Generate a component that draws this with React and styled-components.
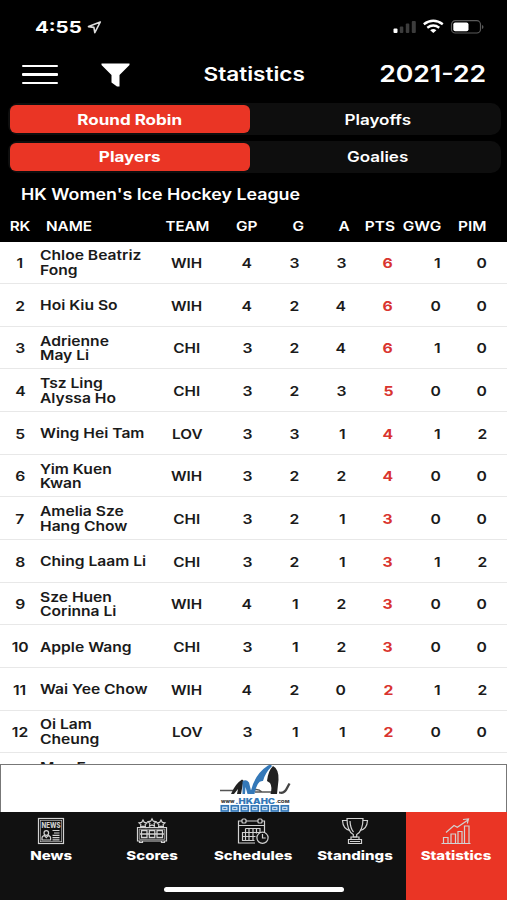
import React from "react";
import styled, { createGlobalStyle } from "styled-components";

const HEADERS = ["GP", "G", "A", "PTS", "GWG", "PIM"];

const PLAYERS = [
  { name: "Chloe Beatriz\nFong", team: "WIH", stats: [4, 3, 3, 6, 1, 0] },
  { name: "Hoi Kiu So", team: "WIH", stats: [4, 2, 4, 6, 0, 0] },
  { name: "Adrienne\nMay Li", team: "CHI", stats: [3, 2, 4, 6, 1, 0] },
  { name: "Tsz Ling\nAlyssa Ho", team: "CHI", stats: [3, 2, 3, 5, 0, 0] },
  { name: "Wing Hei Tam", team: "LOV", stats: [3, 3, 1, 4, 1, 2] },
  { name: "Yim Kuen\nKwan", team: "WIH", stats: [3, 2, 2, 4, 0, 0] },
  { name: "Amelia Sze\nHang Chow", team: "CHI", stats: [3, 2, 1, 3, 0, 0] },
  { name: "Ching Laam Li", team: "CHI", stats: [3, 2, 1, 3, 1, 2] },
  { name: "Sze Huen\nCorinna Li", team: "WIH", stats: [4, 1, 2, 3, 0, 0] },
  { name: "Apple Wang", team: "CHI", stats: [3, 1, 2, 3, 0, 0] },
  { name: "Wai Yee Chow", team: "WIH", stats: [4, 2, 0, 2, 1, 2] },
  { name: "Oi Lam\nCheung", team: "LOV", stats: [3, 1, 1, 2, 0, 0] },
  { name: "Mae F\n ", team: "", stats: [] },
];

const NewsIcon = () => (
  <TabSvg viewBox="0 0 34 30">
    <rect x="4.5" y="2.5" width="25" height="25" />
    <rect x="6.3" y="4.3" width="21.4" height="21.4" strokeWidth="0.6" />
    <text x="17" y="12" textAnchor="middle" textLength="19" lengthAdjust="spacingAndGlyphs">
      NEWS
    </text>
    <circle cx="12.3" cy="17" r="2.3" />
    <path d="M8 24v-2q0-2 2.5-2.3l1.8 2 1.8-2q2.5.3 2.5 2.3v2zM18.5 14.5h7M20 17h5.5M18.5 19.3h7M18.5 21.6h7M18.5 23.9h7" />
  </TabSvg>
);

const STAR = "l1.300 2.400 2.700.4-1.900 1.900.4 2.700-2.500-1.200-2.500 1.200.4-2.700-1.900-1.900 2.700-.4z";

const ScoresIcon = () => (
  <TabSvg viewBox="0 0 34 30">
    <path d="M2.500 11.500h29v13.500h-29zM4.500 25v1.500h3V25M26.500 25v1.500h3V25" />
    <path d="M4.300 13.200h25.400v10.100H4.300z" strokeWidth="0.700" />
    <path d="M6.500 14.500h5.500v7H6.500zM14.300 14.500h5.500v7h-5.500zM22 14.500h5.500v7H22zM5 18h24" strokeWidth="1.300" />
    <path d={`M8 4${STAR}M17 2.800${STAR}M26 4${STAR}`} />
  </TabSvg>
);

const SchedulesIcon = () => (
  <TabSvg viewBox="0 0 34 30">
    <path d="M19 27H2.500V5H6M10 5h12M26 5h2.500v12M3 9.500h25.500" />
    <rect x="6" y="3" width="4" height="4" rx="1" />
    <rect x="22" y="3" width="4" height="4" rx="1" />
    <path d="M9.500 12.500h14.500v4M6.500 16v8.500h12M6.500 16.500h17.500M6.500 20.500h13M9.500 12.500v12M13 12.500v12M17 12.500v12M20.500 12.500v5" />
    <circle cx="26.500" cy="21.800" r="5.600" />
    <path d="M26.500 18v4h3.200" />
  </TabSvg>
);

const StandingsIcon = () => (
  <TabSvg viewBox="0 0 34 30">
    <path d="M9 2.500h16q0 12.500-6.300 16v2.500h-3.400v-2.500Q9 15 9 2.500z" />
    <path d="M9.200 4.500H4.500q.5 8.500 7.300 10M24.800 4.500h4.700q-.5 8.500-7.300 10M12 5q.4 7.500 3.500 11" />
    <path d="M13 21h8v2.500h-8zM10.500 23.500h13v4h-13zM12 25.500h10" />
  </TabSvg>
);

const StatisticsIcon = () => (
  <TabSvg viewBox="0 0 34 30">
    <path d="M2.500 27.500h29M4.500 27.500V21.500h4.500v6M12 27.500V18h4.500v9.500M19 27.500v-12h4v12M25.500 27.500V10h4.500v17.500" />
    <path d="M7 16.500l8-7 3.300 1.800L29 4M24 3.500l5.500-.5-1.200 4.500" />
  </TabSvg>
);

const TABS = [
  { label: "News", Icon: NewsIcon },
  { label: "Scores", Icon: ScoresIcon },
  { label: "Schedules", Icon: SchedulesIcon },
  { label: "Standings", Icon: StandingsIcon },
  { label: "Statistics", Icon: StatisticsIcon, active: true },
];

const LocationIcon = () => (
  <svg width="15" height="13" viewBox="0 0 15 13" fill="none" stroke="#ddd" strokeWidth="1.600" strokeLinejoin="round">
    <path d="M13.300 1L1.500 5.600l5.400.8.900 5.200z" />
  </svg>
);

const StatusIcons = () => (
  <svg width="92" height="16" viewBox="0 0 92 16">
    <rect x="0.500" y="9.500" width="4" height="4.500" rx="1" fill="#fff" />
    <rect x="6.800" y="7.500" width="3.500" height="6.500" rx="1" fill="#3c3c3c" />
    <rect x="12.800" y="4.500" width="3.500" height="9.500" rx="1" fill="#3c3c3c" />
    <rect x="18.800" y="2" width="4" height="12" rx="1" fill="#3c3c3c" />
    <g fill="none" stroke="#fff" strokeWidth="2.400">
      <path d="M30.800 5.300q9.500-7 19 0" />
      <path d="M34.300 8.700q6-4.300 12 0" />
    </g>
    <path d="M37.200 11.200q3.100-2.200 6.200 0l-3.100 2.800z" fill="#fff" />
    <rect x="58.500" y="1.700" width="29" height="12.300" rx="3.800" fill="none" stroke="#5a5a5a" strokeWidth="1.200" />
    <rect x="60.300" y="3.500" width="15.200" height="8.800" rx="2" fill="#fff" />
    <path d="M89 6v4q1.500-.5 1.500-2T89 6z" fill="#5a5a5a" />
  </svg>
);

const FunnelIcon = () => (
  <svg width="29" height="24" viewBox="0 0 29 24">
    <path d="M0.500 0.500h28v1.500L18.500 12v11.500h-2.500l-5.500-4V12L0.500 2z" fill="#fff" />
  </svg>
);

const LeagueLogo = () => (
  <svg width="72" height="47" viewBox="0 0 72 47">
    <path d="M1 25.500h13M30 27q8-5 13 0M36 27h18" stroke="#555" strokeWidth="1.300" fill="none" />
    <path d="M12 29q4-10 11-14.500l1.500 1L22 29h-4l1-5-4 5z" fill="#222" />
    <path d="M23.500 29V16.500q3.500-3 6.500 1l2 8Q36 9 49 .5q3-1.500 4 .5-7 7-9 15-6-1-8.500 13h-7L26.500 22 26 29z" fill="#3478b8" />
    <path d="M54 1q6 3 5.500 14L58 29h-6.500q2-7-.5-11l-3-2Q49 6 54 1z" fill="#222" />
    <path d="M60 26.500q5 1 7-4l2.500-4.500 2 1-3.500 6.500q-3 4.500-8 3z" fill="#444" />
    <LogoText x="2" y="38.300" textLength="13.500" lengthAdjust="spacingAndGlyphs" fill="#444" $size={4.500}>
      www
    </LogoText>
    <LogoText x="16" y="38.500" textLength="40" lengthAdjust="spacingAndGlyphs" fill="#3478b8" $size={7}>
      .HKAHC
    </LogoText>
    <LogoText x="56.500" y="38.300" textLength="14" lengthAdjust="spacingAndGlyphs" fill="#444" $size={4}>
      .COM
    </LogoText>
    {[0, 1, 2, 3, 4, 5, 6].map((i) => (
      <g key={i} fill="none" stroke="#3478b8">
        <rect x={2.300 + i * 10} y="40.800" width="7" height="5.200" fill="#d3e3f1" strokeWidth="1.700" />
        <path d={`M${4.300 + i * 10} 43.500h3`} strokeWidth="1.200" />
      </g>
    ))}
  </svg>
);

const App = () => {
  return (
    <>
      <GlobalStyle />
      <Screen>
        <StatusBar>
          <Clock>
            <Text $size={16.6} $weight={700} $x={1.23} $from="left">4:55</Text>
          </Clock>
          <LocationIcon />
          <StatusRight>
            <StatusIcons />
          </StatusRight>
        </StatusBar>

        <NavBar>
          <MenuButton aria-label="Menu">
            <i />
            <i />
            <i />
          </MenuButton>
          <FilterButton aria-label="Filter">
            <FunnelIcon />
          </FilterButton>
          <Title>
            <Text $size={18.8} $weight={600} $x={1.2}>Statistics</Text>
          </Title>
          <Season>
            <Text $size={22.2} $weight={600} $x={1.2} $from="right">2021-22</Text>
          </Season>
        </NavBar>

        <Segments>
          <Segment>
            <Option $active><Text $size={14.2} $weight={700} $x={1.2}>Round Robin</Text></Option>
            <Option><Text $size={14.2} $weight={600} $x={1.2}>Playoffs</Text></Option>
          </Segment>
          <Segment>
            <Option $active><Text $size={14.2} $weight={700} $x={1.2}>Players</Text></Option>
            <Option><Text $size={14.2} $weight={600} $x={1.2}>Goalies</Text></Option>
          </Segment>
        </Segments>

        <League>
          <Text $size={15.3} $weight={600} $x={1.165} $from="left">HK Women's Ice Hockey League</Text>
        </League>

        <HeaderRow>
          <Center><Text $size={13.3} $weight={600} $x={1.15}>RK</Text></Center>
          <NameHead><Text $size={13.3} $weight={600} $x={1.15} $from="left">NAME</Text></NameHead>
          <Center><Text $size={13.3} $weight={600} $x={1.13}>TEAM</Text></Center>
          {HEADERS.map((h) => (
            <Stat key={h}>
              <Text $size={13.3} $weight={600} $x={1.16} $from="right">{h}</Text>
            </Stat>
          ))}
        </HeaderRow>

        <Table>
          {PLAYERS.map((p, i) => (
            <Row key={p.name}>
              <Center><Text $size={13.3} $weight={600} $x={1.18}>{p.team && i + 1}</Text></Center>
              <Name><Text $size={13.3} $weight={600} $x={1.175} $from="left">{p.name}</Text></Name>
              <Center><Text $size={13.3} $weight={600} $x={1.15}>{p.team}</Text></Center>
              {p.stats.map((value, col) => (
                <Stat key={HEADERS[col]} $points={col === 3}>
                  <Text $size={13.3} $weight={col === 3 ? 700 : 600} $x={1.18} $from="right">{value}</Text>
                </Stat>
              ))}
            </Row>
          ))}
        </Table>

        <Banner>
          <LeagueLogo />
        </Banner>

        <TabBar>
          {TABS.map(({ label, Icon, active }) => (
            <Tab key={label} $active={active}>
              <Icon />
              <Text $size={12.3} $weight={800} $x={1.22}>{label}</Text>
            </Tab>
          ))}
          <HomeIndicator />
        </TabBar>
      </Screen>
    </>
  );
};

const GlobalStyle = createGlobalStyle`
  * {
    box-sizing: border-box;
  }
  body {
    margin: 0;
    background: #000;
    font-family: Inter, "Liberation Sans", sans-serif;
  }
  button {
    border: 0;
    padding: 0;
    margin: 0;
    background: none;
    color: inherit;
    font: inherit;
  }
`;

const Screen = styled.div`
  width: 507px;
  height: 900px;
  display: flex;
  flex-direction: column;
  overflow: hidden;
  background: #000;
  color: #fff;
`;

/* wide lettering: the glyphs are stretched sideways from one edge */
const Text = styled.span`
  display: inline-block;
  white-space: pre;
  font-size: ${(p) => p.$size}px;
  font-weight: ${(p) => p.$weight};
  transform: scaleX(${(p) => p.$x});
  transform-origin: ${(p) => p.$from || "center"} center;
`;

const StatusBar = styled.div`
  height: 54px;
  flex: none;
  display: flex;
  align-items: center;
  padding: 0 22px 0 35px;
`;

const Clock = styled.div`
  width: 52px;
`;

const StatusRight = styled.div`
  margin-left: auto;
  display: flex;
`;

const NavBar = styled.div`
  height: 49px;
  flex: none;
  display: grid;
  grid-template-columns: 36px 115px 206px 1fr;
  align-items: center;
  padding: 0 21px 8px 22px;
`;

const MenuButton = styled.button`
  display: flex;
  flex-direction: column;
  gap: 6px;

  i {
    height: 2.500px;
    width: 36px;
    border-radius: 1px;
    background: #fff;
  }
`;

const FilterButton = styled.button`
  display: flex;
  padding-left: 43px;
`;

const Title = styled.div`
  text-align: center;
  padding-right: 44px;
`;

const Season = styled.div`
  text-align: right;
  white-space: nowrap;
  padding-bottom: 3px;
`;

const Segments = styled.div`
  flex: none;
  display: flex;
  flex-direction: column;
  gap: 5.500px;
  padding: 0 6px 0 8px;
`;

const Segment = styled.div`
  height: 32px;
  display: grid;
  grid-template-columns: 240px 1fr;
  gap: 6px;
  padding: 2px;
  border-radius: 10px;
  background: #0e0e0e;
`;

const Option = styled.div`
  display: flex;
  align-items: center;
  justify-content: center;
  border-radius: 6px;
  background: ${(p) => (p.$active ? "#ea3525" : "transparent")};
`;

const League = styled.div`
  height: 43px;
  flex: none;
  display: flex;
  align-items: center;
  padding-left: 21px;
`;

const HeaderRow = styled.div`
  height: 26px;
  flex: none;
  display: grid;
  grid-template-columns: 40px 117px 60px 41px 46px 46px 45.500px 46px 45.500px;
  line-height: 16px;
  padding-bottom: 5px;
`;

const Center = styled.div`
  display: flex;
  align-items: center;
  justify-content: center;
`;

const Name = styled.div`
  display: flex;
  align-items: center;
  line-height: 14.700px;
`;

const NameHead = styled(Name)`
  padding-left: 6px;
  line-height: inherit;
`;

const Stat = styled.div`
  display: flex;
  align-items: center;
  justify-content: flex-end;
  color: ${(p) => (p.$points ? "#d9342f" : "inherit")};
`;

const Table = styled.div`
  flex: 1;
  min-height: 0;
  overflow: hidden;
  background: #fff;
  color: #1a1a1a;
`;

const Row = styled.div`
  height: 42.670px;
  display: grid;
  grid-template-columns: 40px 117px 60px 35px 47px 47px 47px 47.300px 46.700px;
  padding-top: 1.300px;
  border-bottom: 1px solid #e8e8e8;
`;

const Banner = styled.div`
  height: 48px;
  flex: none;
  display: flex;
  justify-content: center;
  padding-left: 2px;
  border: 1px solid #777;
  border-bottom: 0;
  background: #fff;
`;

const LogoText = styled.text`
  font-family: Inter, sans-serif;
  font-size: ${(p) => p.$size}px;
  font-weight: 900;
`;

const TabBar = styled.div`
  position: relative;
  height: 88.500px;
  flex: none;
  display: grid;
  grid-template-columns: repeat(5, 1fr);
  background: #111;
`;

const Tab = styled.div`
  display: flex;
  flex-direction: column;
  align-items: center;
  gap: 2px;
  padding-top: 4px;
  background: ${(p) => (p.$active ? "#ea3525" : "transparent")};
`;

const TabSvg = styled.svg`
  width: 34px;
  height: 30px;
  fill: none;
  stroke: #d2d2d2;
  stroke-width: 1.200;

  text {
    font-family: Inter, sans-serif;
    font-size: 7.500px;
    font-weight: 800;
    fill: #d2d2d2;
    stroke: none;
  }
`;

const HomeIndicator = styled.div`
  position: absolute;
  left: 164px;
  bottom: 8px;
  width: 180px;
  height: 5.500px;
  border-radius: 3px;
  background: #fff;
`;

export default App;
